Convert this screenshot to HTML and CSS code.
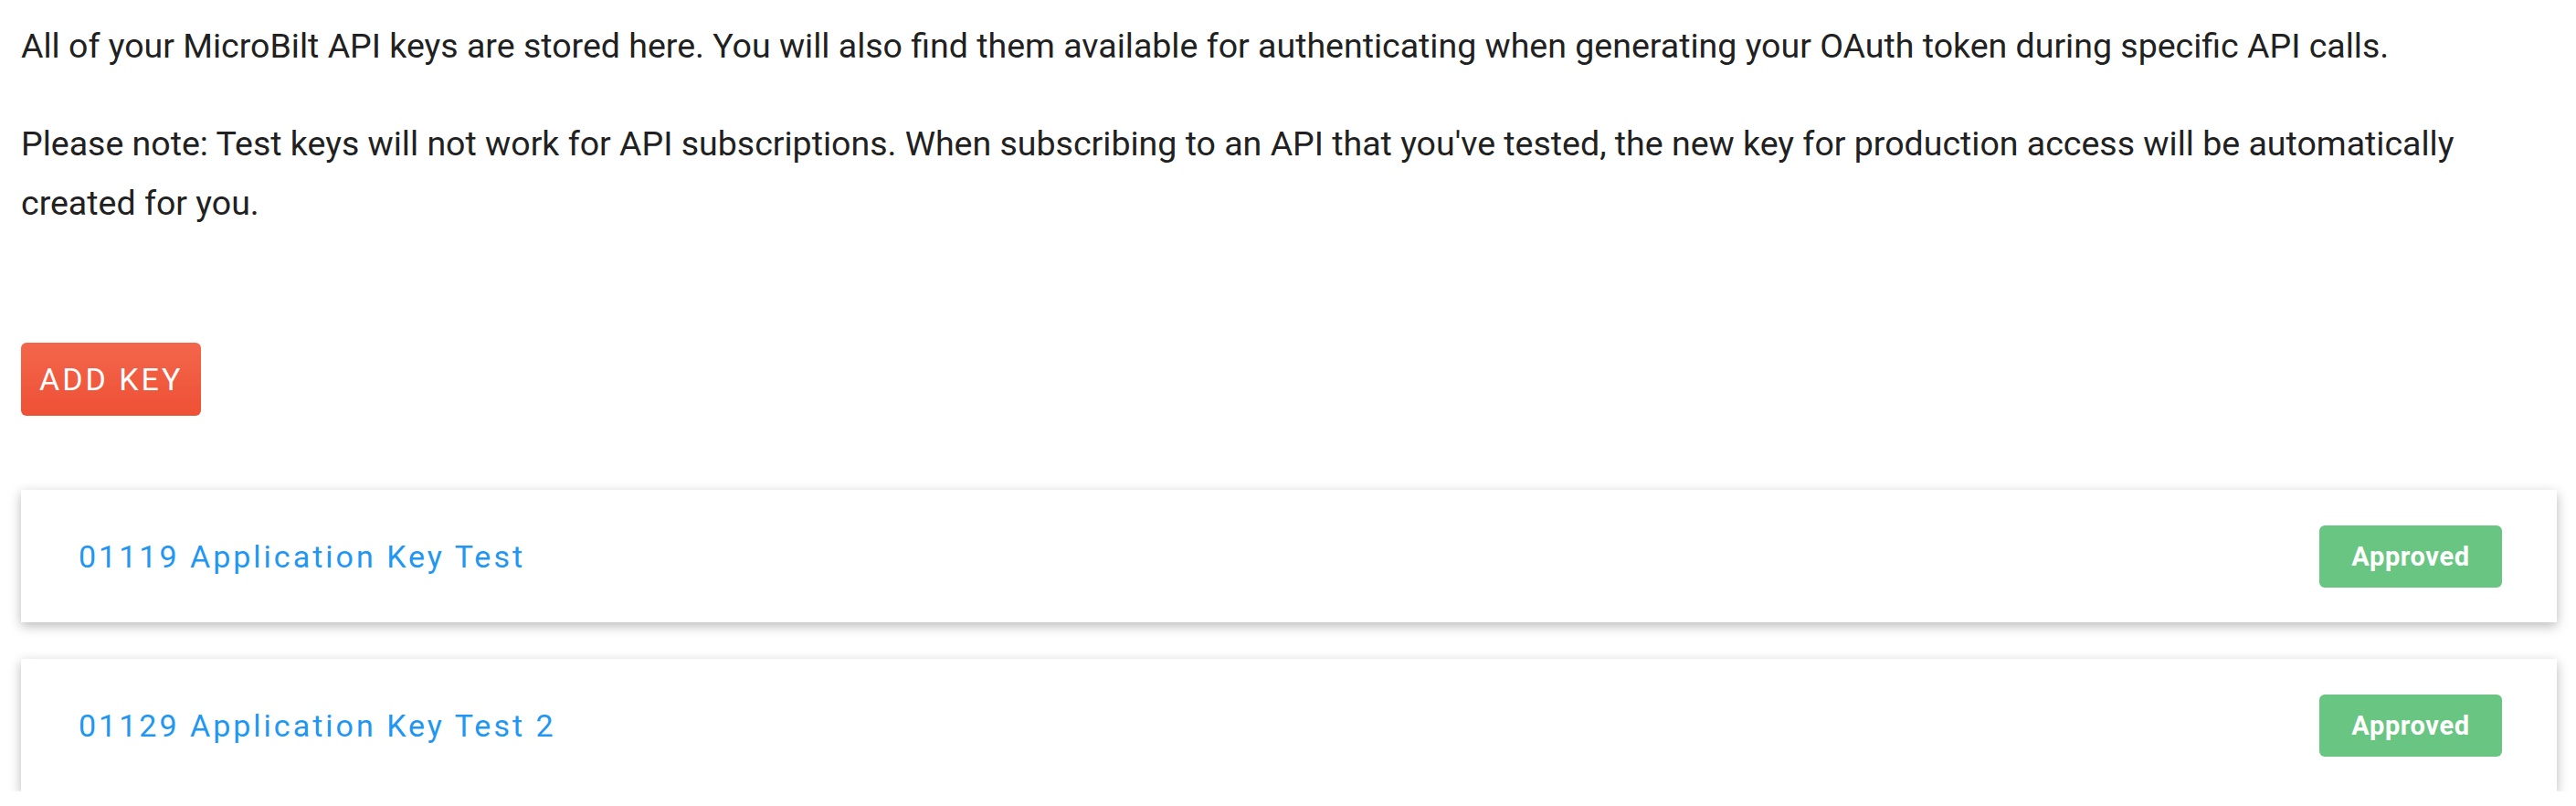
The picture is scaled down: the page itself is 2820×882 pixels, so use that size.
FILE: index.html
```html
<!DOCTYPE html>
<html lang="en">
<head>
<meta charset="utf-8">
<title>API Keys</title>
<link rel="stylesheet" href="styles.css">
</head>
<body>
<main class="page">
  <p class="intro">All of your MicroBilt API keys are stored here. You will also find them available for authenticating when generating your OAuth token during specific API calls.</p>
  <p class="intro">Please note: Test keys will not work for API subscriptions. When subscribing to an API that you've tested, the new key for production access will be automatically created for you.</p>
  <div class="actions">
    <button class="add-key" type="button">ADD KEY</button>
  </div>
  <ul class="key-list">
    <li class="key-card">
      <a class="key-name" href="#">01119 Application Key Test</a>
      <span class="badge">Approved</span>
    </li>
    <li class="key-card">
      <a class="key-name" href="#">01129 Application Key Test 2</a>
      <span class="badge">Approved</span>
    </li>
  </ul>
</main>
</body>
</html>
```
FILE: styles.css
```css
html, body {
  margin: 0;
  padding: 0;
  background: #ffffff;
}

body {
  font-family: Roboto, "Liberation Sans", Arial, sans-serif;
  color: #212121;
}

.page {
  padding: 18px 21px 0 23px;
}

.intro {
  margin: 0 0 42px 0;
  font-size: 37.5px;
  line-height: 65px;
}

.intro:last-of-type {
  margin-bottom: 0;
}

.actions {
  padding-top: 120px;
}

.add-key {
  display: block;
  height: 80px;
  padding: 0 20px;
  border: none;
  border-radius: 6px;
  background: linear-gradient(to bottom, #f3664b, #ee5035);
  color: #ffffff;
  font-family: Roboto, "Liberation Sans", Arial, sans-serif;
  font-size: 34px;
  letter-spacing: 3px;
  cursor: pointer;
}

.key-list {
  list-style: none;
  margin: 81px 0 0 0;
  padding: 0;
  display: flex;
  flex-direction: column;
  gap: 40px;
}

.key-card {
  display: flex;
  align-items: center;
  justify-content: space-between;
  height: 145px;
  padding: 0 60px 0 63px;
  background: #ffffff;
  box-shadow: 0 4px 12px rgba(0, 0, 0, 0.28);
}

.key-name {
  color: #2196f3;
  text-decoration: none;
  font-size: 34px;
  letter-spacing: 3px;
}

.badge {
  display: flex;
  align-items: center;
  justify-content: center;
  width: 200px;
  height: 68px;
  border-radius: 6px;
  background: #69c582;
  color: #ffffff;
  font-weight: 700;
  font-size: 29px;
  letter-spacing: 0.6px;
}
```
